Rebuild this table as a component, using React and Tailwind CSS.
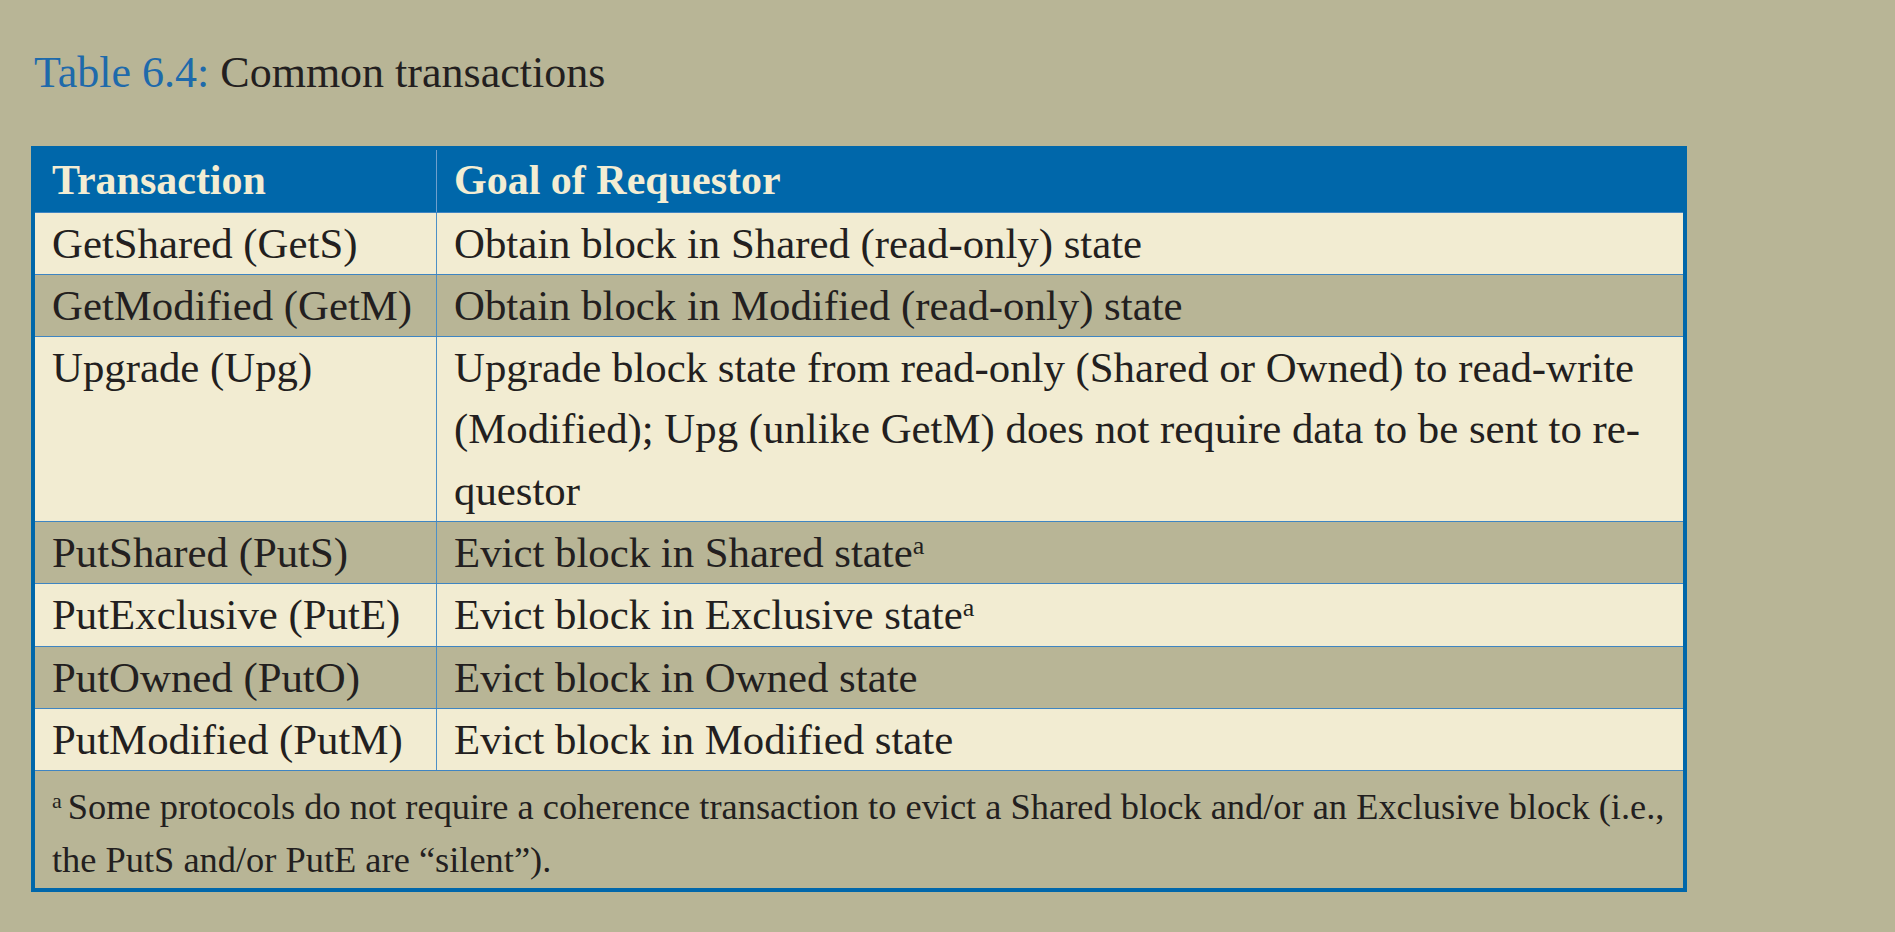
const rows = [
  { name: "GetShared (GetS)", goal: ["Obtain block in Shared (read-only) state"], light: true },
  { name: "GetModified (GetM)", goal: ["Obtain block in Modified (read-only) state"], light: false },
  {
    name: "Upgrade (Upg)",
    goal: [
      "Upgrade block state from read-only (Shared or Owned) to read-write",
      "(Modified); Upg (unlike GetM) does not require data to be sent to re-",
      "questor",
    ],
    light: true,
  },
  { name: "PutShared (PutS)", goal: ["Evict block in Shared state"], note: true, light: false },
  { name: "PutExclusive (PutE)", goal: ["Evict block in Exclusive state"], note: true, light: true },
  { name: "PutOwned (PutO)", goal: ["Evict block in Owned state"], light: false },
  { name: "PutModified (PutM)", goal: ["Evict block in Modified state"], light: true },
];

export default function App() {
  return (
    <div
      className="min-h-screen bg-[#b8b596] text-[#231f20]"
      style={{ fontFamily: '"Liberation Serif", "Times New Roman", serif' }}
    >
      <div className="pl-[34px] pt-[48px] text-[44px] leading-[50px]">
        <span className="text-[#1e6aab]">Table 6.4:</span> Common transactions
      </div>

      <div className="ml-[31px] mt-[48px] w-[1656px] border-[4px] border-[#0067aa]">
        <div className="grid grid-cols-[402px_1fr] bg-[#0067aa] text-[42px] font-bold leading-[61.5px] text-[#f3edd3]">
          <div className="border-r border-[#6f9fcc] pl-[17px]">Transaction</div>
          <div className="pl-[17px]">Goal of Requestor</div>
        </div>

        {rows.map((row) => (
          <div
            key={row.name}
            className={`grid grid-cols-[402px_1fr] border-t border-[#3f85c2] text-[42.8px] leading-[61.3px] ${
              row.light ? "bg-[#f2ecd2]" : "bg-[#b8b596]"
            }`}
          >
            <div className="border-r border-[#4d8fc6] pl-[17px]">{row.name}</div>
            <div className="pl-[17px]">
              {row.goal.map((line, i) => (
                <div key={i}>
                  {line}
                  {row.note && <sup className="text-[26px]">a</sup>}
                </div>
              ))}
            </div>
          </div>
        ))}

        <div className="border-t border-[#3f85c2] bg-[#b8b596] pb-[1px] pl-[17px] pt-[10px] text-[36.4px] leading-[53px]">
          <div>
            <sup className="mr-[6px] text-[22px]">a</sup>
            Some protocols do not require a coherence transaction to evict a Shared block and/or an Exclusive block (i.e.,
          </div>
          <div>the PutS and/or PutE are “silent”).</div>
        </div>
      </div>
    </div>
  );
}
